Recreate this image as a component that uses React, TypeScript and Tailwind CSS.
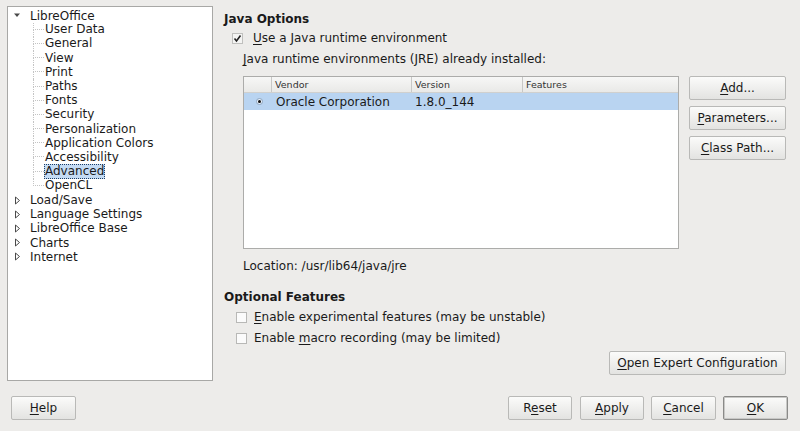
import type { ReactNode } from "react";

type Child = { label: string; selected?: boolean };

const libreChildren: Child[] = [
  { label: "User Data" },
  { label: "General" },
  { label: "View" },
  { label: "Print" },
  { label: "Paths" },
  { label: "Fonts" },
  { label: "Security" },
  { label: "Personalization" },
  { label: "Application Colors" },
  { label: "Accessibility" },
  { label: "Advanced", selected: true },
  { label: "OpenCL" },
];

const collapsed = ["Load/Save", "Language Settings", "LibreOffice Base", "Charts", "Internet"];

function Mnemonic({ text, at }: { text: string; at: number }) {
  if (at < 0) return <>{text}</>;
  return (
    <>
      {text.slice(0, at)}
      <span className="underline underline-offset-2">{text[at]}</span>
      {text.slice(at + 1)}
    </>
  );
}

function Btn({ text, at, className = "", primary = false }: { text: string; at: number; className?: string; primary?: boolean }) {
  return (
    <div
      className={
        "flex h-[24px] items-center justify-center rounded-[2px] border bg-gradient-to-b from-[#fbfbfa] to-[#e3e3e1] text-[12px] text-[#1a1a1a] " +
        (primary ? "border-[#8a8a88] shadow-[inset_0_0_0_1px_#c8c8c6]" : "border-[#b9b9b7]") +
        " " +
        className
      }
    >
      <span>
        <Mnemonic text={text} at={at} />
      </span>
    </div>
  );
}

function ExpandedArrow() {
  return (
    <svg width="9" height="9" viewBox="0 0 9 9" className="shrink-0">
      <path d="M1 2.5 L7 2.5 L4 6 Z" fill="#4a4a4a" />
    </svg>
  );
}

function CollapsedArrow() {
  return (
    <svg width="9" height="9" viewBox="0 0 9 9" className="shrink-0">
      <path d="M2.5 1 L6.5 4.5 L2.5 8 Z" fill="none" stroke="#4a4a4a" strokeWidth="1" />
    </svg>
  );
}

function CheckBox({ checked }: { checked?: boolean }) {
  return (
    <svg width="11" height="11" viewBox="0 0 11 11" className="shrink-0">
      <rect x="0.5" y="0.5" width="10" height="10" fill={checked ? "#f4f4f3" : "#fbfbfb"} stroke={checked ? "#c0c0be" : "#b8b8b6"} />
      {checked && <path d="M2.5 5.5 L4.5 8 L8.5 2.5" fill="none" stroke="#222" strokeWidth="1.6" />}
    </svg>
  );
}

function TreeRow({ children }: { children: ReactNode }) {
  return <div className="flex h-[14.2px] items-center">{children}</div>;
}

export default function App() {
  return (
    <div className="flex h-[431px] w-[800px] flex-col overflow-hidden bg-[#edecea] font-['DejaVu_Sans',sans-serif] text-[12px] leading-[14px] text-[#1a1a1a]">
      <div className="flex h-[381px]">
        {/* tree */}
        <div className="ml-[7px] mt-[6px] h-[375px] w-[206px] border border-[#a8a8a6] bg-white pt-[1.5px]">
          <TreeRow>
            <div className="ml-[5px] mr-[8px] flex">
              <ExpandedArrow />
            </div>
            <span>LibreOffice</span>
          </TreeRow>
          {libreChildren.map((c, i) => {
            const last = i === libreChildren.length - 1;
            return (
              <div key={c.label} className="flex h-[14.2px] items-stretch pl-[25px]">
                <div className="flex w-[11px] flex-col">
                  <div className="h-1/2 border-b border-l border-dotted border-[#c4c4c4]" />
                  <div className={"h-1/2 border-l border-dotted " + (last ? "border-transparent" : "border-[#c4c4c4]")} />
                </div>
                <div className="flex items-center">
                  <span
                    className={
                      "border leading-[13px] " +
                      (c.selected ? "border-dotted border-[#1e3f66] bg-[#c4dbf4]" : "border-transparent")
                    }
                  >
                    {c.label}
                  </span>
                </div>
              </div>
            );
          })}
          {collapsed.map((label) => (
            <TreeRow key={label}>
              <div className="ml-[5px] mr-[8px] flex">
                <CollapsedArrow />
              </div>
              <span>{label}</span>
            </TreeRow>
          ))}
        </div>

        {/* right panel */}
        <div className="ml-[11px] flex w-[564px] flex-col">
          <div className="mt-[12px] font-bold">Java Options</div>
          <div className="mt-[5px] flex items-center gap-[10px] pl-[8px]">
            <CheckBox checked />
            <span>
              <Mnemonic text="Use a Java runtime environment" at={0} />
            </span>
          </div>
          <div className="mt-[7px] pl-[19px]">
            <Mnemonic text="Java runtime environments (JRE) already installed:" at={0} />
          </div>
          <div className="mt-[10px] flex pl-[19px]">
            <div className="h-[173px] w-[436px] border border-[#acacaa] bg-white">
              <div className="flex h-[16px] border-b border-[#d0d0ce] bg-gradient-to-b from-[#f7f7f6] to-[#e9e9e7] text-[9.5px] leading-[15px] text-[#333]">
                <div className="w-[28px] border-r border-[#c8c8c6]" />
                <div className="w-[140px] border-r border-[#c8c8c6] pl-[3px]">Vendor</div>
                <div className="w-[111px] border-r border-[#c8c8c6] pl-[3px]">Version</div>
                <div className="flex-1 pl-[3px]">Features</div>
              </div>
              <div className="flex h-[17px] items-center bg-[#b9d4f1]">
                <div className="flex w-[28px] justify-center pl-[2px]">
                  <span className="flex h-[7px] w-[7px] items-center justify-center rounded-full border border-[#8da5c0] bg-[#e8f0fa]">
                    <span className="h-[3px] w-[3px] rounded-full bg-[#111]" />
                  </span>
                </div>
                <div className="w-[140px] pl-[4px]">Oracle Corporation</div>
                <div className="w-[111px] pl-[3px]">1.8.0_144</div>
                <div className="flex-1" />
              </div>
            </div>
            <div className="ml-[10px] flex w-[97px] flex-col gap-[6px]">
              <Btn text="Add..." at={0} />
              <Btn text="Parameters..." at={0} />
              <Btn text="Class Path..." at={0} />
            </div>
          </div>
          <div className="mt-[10px] pl-[19px]">Location: /usr/lib64/java/jre</div>
          <div className="mt-[17px] font-bold">Optional Features</div>
          <div className="mt-[6px] flex items-center gap-[7px] pl-[12px]">
            <CheckBox />
            <span>
              <Mnemonic text="Enable experimental features (may be unstable)" at={0} />
            </span>
          </div>
          <div className="mt-[7px] flex items-center gap-[7px] pl-[12px]">
            <CheckBox />
            <span>
              <Mnemonic text="Enable macro recording (may be limited)" at={7} />
            </span>
          </div>
          <div className="mt-[6px] flex justify-end pr-[2px]">
            <Btn text="Open Expert Configuration" at={0} className="w-[177px]" />
          </div>
        </div>
      </div>

      {/* bottom buttons */}
      <div className="mt-[15px] flex items-center pr-[12px]">
        <Btn text="Help" at={0} className="ml-[11px] w-[65px]" />
        <div className="flex-1" />
        <Btn text="Reset" at={1} className="w-[64px]" />
        <Btn text="Apply" at={0} className="ml-[8px] w-[64px]" />
        <Btn text="Cancel" at={0} className="ml-[7px] w-[65px]" />
        <Btn text="OK" at={0} className="ml-[7px] w-[65px]" primary />
      </div>
    </div>
  );
}
